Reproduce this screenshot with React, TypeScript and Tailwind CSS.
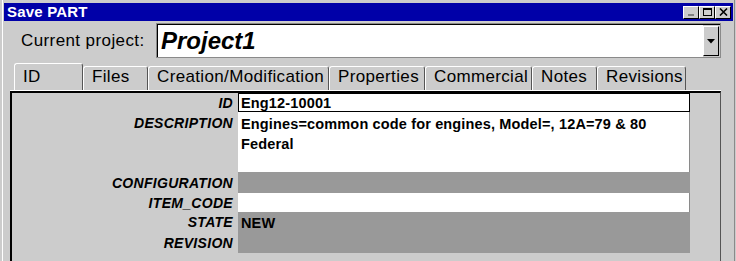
import React from 'react'

const tabs = [
  { name: 'ID', w: 69, active: true },
  { name: 'Files', w: 65 },
  { name: 'Creation/Modification', w: 181 },
  { name: 'Properties', w: 96 },
  { name: 'Commercial', w: 107 },
  { name: 'Notes', w: 65 },
  { name: 'Revisions', w: 89 },
]

function Field({ label, h, tone, top, children }: { label: string; h: number; tone: 'white' | 'gray' | 'focus'; top?: boolean; children?: React.ReactNode }) {
  const valueCls =
    tone === 'focus'
      ? 'bg-white border border-black pl-[2px] flex items-center'
      : tone === 'white'
        ? 'bg-white border-r border-r-[#8a8a8a] pl-[3px] pt-[1px]'
        : 'bg-[#999999] pl-[3px] pt-[1px]'
  return (
    <div className="flex" style={{ height: h }}>
      <div className={`w-[226px] pr-[5px] flex justify-end ${top ? 'items-start pt-[3px]' : 'items-center'} font-bold italic text-[14px] leading-[16px] tracking-[0.3px]`}>
        {label}
      </div>
      <div className={`w-[452px] ${valueCls} font-bold text-[14.5px] leading-[20px] tracking-[0.15px]`}>
        {children}
      </div>
    </div>
  )
}

export default function App() {
  return (
    <div className="w-[736px] h-[261px] overflow-hidden bg-[#cccccc] pl-[2px] pr-[1px] text-black" style={{ fontFamily: '"Liberation Sans", Arial, sans-serif' }}>
      <div className="h-full border-l border-white border-r border-r-[#8a8a8a] pl-[1px] pr-[1px] pt-[3px]">
        {/* Title bar */}
        <div className="h-[18px] bg-[#0000a8] flex items-center justify-between pl-[3px] pr-[2px]">
          <span className="text-white font-bold text-[15px] leading-[18px] tracking-[0.2px]">Save PART</span>
          <div className="flex">
            {['min', 'max', 'close'].map((b) => (
              <div key={b} className="w-[16px] h-[13px] bg-[#cccccc] border-t border-l border-white border-r border-b border-r-black border-b-black flex items-center justify-center">
                {b === 'min' && <div className="w-[6px] h-[2px] bg-[#808080] mt-[6px]" />}
                {b === 'max' && <div className="w-[9px] h-[8px] border border-black border-t-2" />}
                {b === 'close' && (
                  <svg width="9" height="8" viewBox="0 0 9 8">
                    <path d="M1 0.5 L8 7.5 M8 0.5 L1 7.5" stroke="black" strokeWidth="1.6" />
                  </svg>
                )}
              </div>
            ))}
          </div>
        </div>

        {/* Current project */}
        <div className="flex items-center mt-[2px] h-[35px]">
          <span className="ml-[17px] w-[135px] text-[17px] leading-[20px] tracking-[0.4px]">Current project:</span>
          <div className="w-[565px] h-[35px] border border-[#8a8a8a] flex">
            <div className="flex-1 flex border-t border-l border-black">
              <div className="flex-1 bg-white flex items-center pl-[3px] font-bold italic text-[24px] leading-[28px]">Project1</div>
              <div className="w-[16px] my-[1px] mr-[1px] bg-[#cccccc] border-t border-l border-white border-r border-b border-r-black border-b-black flex items-center justify-center">
                <svg width="8" height="5" viewBox="0 0 8 5">
                  <path d="M0 0 H8 L4 4.5 Z" fill="black" />
                </svg>
              </div>
            </div>
          </div>
        </div>

        {/* Tabs */}
        <div className="flex items-end mt-[5px] ml-[10px] h-[27px]">
          {tabs.map((t) => (
            <div
              key={t.name}
              style={{ width: t.w }}
              className={`${t.active ? 'h-[27px]' : 'h-[24px]'} flex items-end pb-[3px] pl-[8px] rounded-t-[3px] border-t border-l border-white border-r border-r-[#555555] text-[17px] leading-[20px] tracking-[0.35px]`}
            >
              {t.name}
            </div>
          ))}
        </div>

        {/* Panel */}
        <div className="ml-[6px] w-[711px] border-t border-white">
          <div className="border-t-2 border-l-2 border-black border-r border-r-[#555555] h-[180px]">
            <Field label="ID" h={19} tone="focus">Eng12-10001</Field>
            <Field label="DESCRIPTION" h={60} tone="white" top>
              <div className="pt-[1px]">Engines=common code for engines, Model=, 12A=79 &amp; 80</div>
              <div>Federal</div>
            </Field>
            <Field label="CONFIGURATION" h={21} tone="gray" />
            <Field label="ITEM_CODE" h={19} tone="white" />
            <Field label="STATE" h={20} tone="gray">NEW</Field>
            <Field label="REVISION" h={21} tone="gray" />
          </div>
        </div>
      </div>
    </div>
  )
}
